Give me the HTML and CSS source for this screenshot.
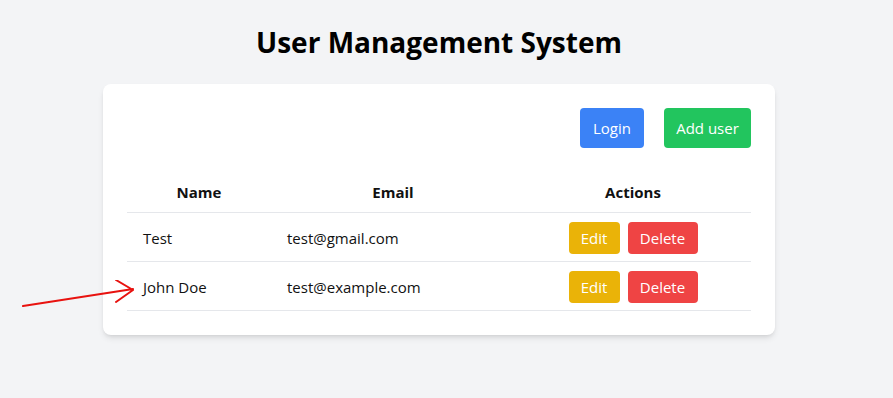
FILE: index.html
```html
<!DOCTYPE html>
<html lang="en">
<head>
<meta charset="utf-8">
<title>User Management System</title>
<link rel="stylesheet" href="styles.css">
</head>
<body>
<div class="page">
  <h1 class="title">User Management System</h1>
  <div class="card">
    <div class="toolbar">
      <button class="btn btn-blue">Login</button>
      <button class="btn btn-green">Add user</button>
    </div>
    <table class="users">
      <thead>
        <tr>
          <th class="col-name">Name</th>
          <th class="col-email">Email</th>
          <th class="col-actions">Actions</th>
        </tr>
      </thead>
      <tbody>
        <tr>
          <td>Test</td>
          <td>test@gmail.com</td>
          <td class="actions"><button class="btn-sm btn-yellow">Edit</button><button class="btn-sm btn-red">Delete</button></td>
        </tr>
        <tr>
          <td>John Doe</td>
          <td>test@example.com</td>
          <td class="actions"><button class="btn-sm btn-yellow">Edit</button><button class="btn-sm btn-red">Delete</button></td>
        </tr>
      </tbody>
    </table>
  </div>
</div>
<svg class="arrow" width="140" height="40" viewBox="0 0 140 40">
  <path d="M23 26 L133 9 M116 0 L133 10 L116 22" fill="none" stroke="#e8120f" stroke-width="2" stroke-linecap="round" stroke-linejoin="round"/>
</svg>
</body>
</html>
```
FILE: styles.css
```css
* { box-sizing: border-box; }
html, body { margin: 0; padding: 0; }
body {
  background: #f3f4f6;
  font-family: "Open Sans", "Noto Sans", sans-serif;
  color: #111;
  width: 893px;
  height: 398px;
  position: relative;
  overflow: hidden;
}
.page {
  width: 878px;
  padding-top: 24px;
  display: flex;
  flex-direction: column;
  align-items: center;
}
.title {
  margin: 0 0 24px;
  font-size: 28px;
  line-height: 36px;
  font-weight: 700;
  color: #000;
}
.card {
  width: 672px;
  background: #fff;
  border-radius: 8px;
  box-shadow: 0 4px 6px -1px rgba(0,0,0,0.1), 0 2px 4px -2px rgba(0,0,0,0.1);
  padding: 24px;
}
.toolbar {
  display: flex;
  justify-content: flex-end;
  gap: 20px;
  margin-bottom: 24px;
}
.btn {
  font-family: inherit;
  font-size: 15px;
  line-height: 24px;
  border: 0;
  border-radius: 4px;
  padding: 8px 0;
  color: #fff;
  height: 40px;
}
.btn-blue { background: #3b82f6; width: 64px; }
.btn-green { background: #22c55e; width: 87px; }
.users {
  width: 624px;
  border-collapse: collapse;
  font-size: 15px;
}
.users th {
  font-weight: 700;
  padding: 8px 16px;
  line-height: 24px;
  text-align: center;
  border-bottom: 1px solid #e5e7eb;
}
.col-name { width: 144px; }
.col-email { width: 244px; }
.users td {
  padding: 9px 16px 7px;
  height: 49px;
  line-height: 24px;
  text-align: left;
  border-bottom: 1px solid #e5e7eb;
}
.users td.actions { text-align: center; }
.btn-sm {
  font-family: inherit;
  font-size: 15px;
  line-height: 24px;
  border: 0;
  border-radius: 4px;
  padding: 4px 0;
  height: 32px;
  color: #fff;
  vertical-align: middle;
}
.btn-sm + .btn-sm { margin-left: 8px; }
.btn-yellow { background: #eab308; width: 51px; }
.btn-red { background: #ef4444; width: 70px; }
.arrow {
  position: absolute;
  left: 0;
  top: 280px;
}
```
